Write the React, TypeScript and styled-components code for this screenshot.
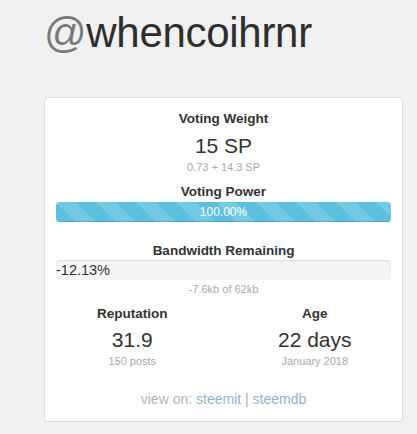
import styled, { createGlobalStyle } from 'styled-components';

const GlobalStyle = createGlobalStyle`
  html, body {
    margin: 0;
    padding: 0;
    background: #f1f1f1;
    font-family: 'Liberation Sans', Arial, Helvetica, sans-serif;
    color: #333;
  }
`;

const Page = styled.div`
  width: 359px;
  margin-left: 44px;
  padding-top: 10px;
`;

const Title = styled.h1`
  margin: 0 0 41px 0;
  font-size: 42px;
  line-height: 1.1;
  font-weight: normal;
  color: #2e2e2e;
  letter-spacing: -0.3px;

  .at {
    color: #7a7a7a;
  }
`;

const Card = styled.div`
  box-sizing: border-box;
  width: 359px;
  padding: 12px 11px;
  background: #fff;
  border: 1px solid #dcdcdc;
  border-radius: 4px;
  box-shadow: 0 1px 1px rgba(0, 0, 0, 0.04);
  text-align: center;
`;

const Label = styled.div<{ $gap?: number }>`
  margin-top: ${(p) => p.$gap ?? 0}px;
  font-size: 13.5px;
  line-height: 18px;
  font-weight: bold;
  color: #333;
`;

const BigValue = styled.div<{ $gap?: number }>`
  margin-top: ${(p) => p.$gap ?? 0}px;
  font-size: 21px;
  line-height: 24px;
  color: #333;
`;

const Small = styled.div<{ $gap?: number }>`
  margin-top: ${(p) => p.$gap ?? 0}px;
  font-size: 11px;
  line-height: 14px;
  color: #a9a9a9;
`;

const Progress = styled.div<{ $gap?: number }>`
  position: relative;
  margin-top: ${(p) => p.$gap ?? 0}px;
  height: 20px;
  border-radius: 4px;
  background: #f5f5f5;
  box-shadow: inset 0 1px 2px rgba(0, 0, 0, 0.1);
  overflow: hidden;
  text-align: left;
`;

const Fill = styled.div`
  height: 100%;
  background-color: #5bc0de;
  background-image: linear-gradient(
    45deg,
    rgba(255, 255, 255, 0.15) 25%,
    transparent 25%,
    transparent 50%,
    rgba(255, 255, 255, 0.15) 50%,
    rgba(255, 255, 255, 0.15) 75%,
    transparent 75%,
    transparent
  );
  background-size: 40px 40px;
  box-shadow: inset 0 -1px 0 rgba(0, 0, 0, 0.15);
  color: #fff;
  font-size: 12px;
  line-height: 20px;
  text-align: center;
`;

const BarText = styled.span`
  display: block;
  font-size: 14.5px;
  line-height: 20px;
  color: #333;
`;

const Stats = styled.div`
  display: grid;
  grid-template-columns: 1fr 1fr;
  margin: 9px -15px 0;
`;

const Stat = styled.div`
  text-align: center;
`;

const Footer = styled.div`
  margin-top: 21px;
  font-size: 14px;
  line-height: 20px;
  color: #b5b5b5;

  a {
    color: #93b3cc;
    text-decoration: none;
  }
  .sep {
    color: #a8a8a8;
  }
`;

export default function App() {
  const power = 100;
  return (
    <>
      <GlobalStyle />
      <Page>
        <Title>
          <span className="at">@</span>whencoihrnr
        </Title>
        <Card>
          <Label>Voting Weight</Label>
          <BigValue $gap={6}>15 SP</BigValue>
          <Small $gap={2}>0.73 + 14.3 SP</Small>

          <Label $gap={9}>Voting Power</Label>
          <Progress $gap={1}>
            <Fill style={{ width: `${power}%` }}>100.00%</Fill>
          </Progress>

          <Label $gap={20}>Bandwidth Remaining</Label>
          <Progress>
            <BarText>-12.13%</BarText>
          </Progress>
          <Small $gap={2}>-7.6kb of 62kb</Small>

          <Stats>
            <Stat>
              <Label>Reputation</Label>
              <BigValue $gap={5}>31.9</BigValue>
              <Small $gap={2}>150 posts</Small>
            </Stat>
            <Stat>
              <Label>Age</Label>
              <BigValue $gap={5}>22 days</BigValue>
              <Small $gap={2}>January 2018</Small>
            </Stat>
          </Stats>

          <Footer>
            view on: <a href="#">steemit</a> <span className="sep">|</span>{' '}
            <a href="#">steemdb</a>
          </Footer>
        </Card>
      </Page>
    </>
  );
}
